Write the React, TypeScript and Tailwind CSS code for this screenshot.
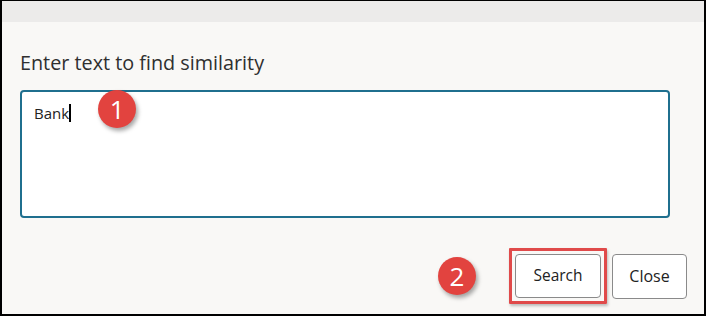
import React from 'react';

function Badge({ n }: { n: string }) {
    return (
        <div className="flex h-[38px] w-[38px] shrink-0 items-center justify-center rounded-full bg-[#e2433f] text-[26px] leading-none text-white shadow-[2px_3px_4px_rgba(0,0,0,0.35)] [font-family:'Open_Sans',sans-serif]">
            {n}
        </div>
    );
}

export default function App() {
    return (
        <div className="flex h-[316px] w-[706px] flex-col border-x-2 border-b-2 border-t border-black bg-[#f9f8f6] [font-family:'Open_Sans','Noto_Sans',sans-serif]">
            <div className="h-[21px] shrink-0 bg-[#ecebea]" />

            <div className="flex flex-1 flex-col pl-[18px] pr-[17px]">
                <div className="mt-[27px] text-[19.8px] leading-[27px] text-[#2f2f2f]">
                    Enter text to find similarity
                </div>

                <div className="mt-[14px] flex h-[128px] w-[650px] items-start rounded-[4px] border-2 border-[#1f6f8e] bg-white pl-[12px] pt-[10px]">
                    <span className="text-[15px] leading-[22px] text-[#222]">Bank</span>
                    <span className="mt-[2px] h-[18px] w-[2px] bg-black" />
                    <div className="-mt-[12px] ml-[27px]">
                        <Badge n="1" />
                    </div>
                </div>

                <div className="mt-[30px] flex items-center justify-end">
                    <div className="mr-[33px]">
                        <Badge n="2" />
                    </div>
                    <div className="rounded-[1px] border-[3px] border-[#e04a4a] p-[3px] shadow-[1px_2px_3px_rgba(0,0,0,0.25)]">
                        <button className="flex h-[44px] w-[86px] items-center justify-center rounded-[4px] border border-[#8a8a8a] bg-white text-[15.5px] text-[#222]">
                            Search
                        </button>
                    </div>
                    <button className="ml-[5px] flex h-[45px] w-[75px] items-center justify-center rounded-[4px] border border-[#8a8a8a] bg-white text-[16px] text-[#222]">
                        Close
                    </button>
                </div>
            </div>
        </div>
    );
}
